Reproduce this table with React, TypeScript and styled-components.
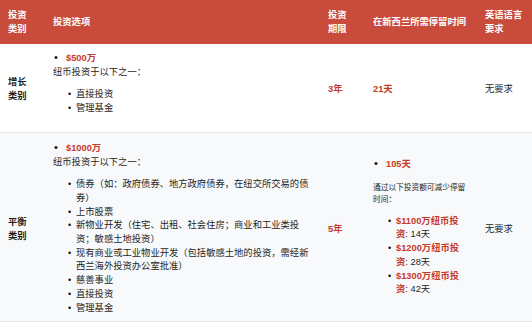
import * as React from 'react';
import styled, { createGlobalStyle } from 'styled-components';

const GlobalStyle = createGlobalStyle`
  body {
    margin: 0;
    background: #fff;
    font-family: "Liberation Sans", "Noto Sans CJK SC", sans-serif;
  }
`;

const COLS = '45px 275px 45px 112px 55px';

const Table = styled.div`
  width: 532px;
`;

const Row = styled.div<{ $bg?: string }>`
  display: grid;
  grid-template-columns: ${COLS};
  background: ${p => p.$bg || '#fff'};
  border-bottom: 1px solid #e6e9ec;
`;

const HeadRow = styled(Row)`
  height: 44px;
  background: #c84b3b;
  border-bottom: none;
`;

const HeadCell = styled.div`
  display: flex;
  align-items: center;
  padding: 0 8px;
  color: #fff;
  font-weight: bold;
  font-size: 9.3px;
  line-height: 14px;
`;

const Cell = styled.div<{ $pt?: number; $pb?: number }>`
  display: flex;
  flex-direction: column;
  justify-content: center;
  padding: ${p => p.$pt ?? 0}px 8px ${p => p.$pb ?? 0}px;
  font-size: 9.3px;
  line-height: 13.7px;
  color: #1e1e1e;
`;

const Label = styled.div`
  font-weight: bold;
`;

const Red = styled.span`
  color: #c53a2a;
  font-weight: bold;
`;

const Para = styled.p`
  margin: 0;
`;

const Note = styled.p`
  margin: 10px 0 9px;
  font-size: 7.7px;
  line-height: 12px;
`;

const List = styled.ul<{ $nested?: boolean }>`
  list-style: none;
  margin: ${p => (p.$nested ? '9px 0' : '0')};
  padding-left: ${p => (p.$nested ? 23 : 13)}px;
`;

const Item = styled.li<{ $nested?: boolean }>`
  &::before {
    content: '•';
    display: inline-block;
    width: ${p => (p.$nested ? 8 : 12)}px;
    margin-left: ${p => (p.$nested ? -8 : -12)}px;
    font-size: ${p => (p.$nested ? 9 : 11)}px;
    color: #111;
  }
`;

const growthFunds = ['直接投资', '管理基金'];

const balancedFunds = [
  '债券（如：政府债券、地方政府债券，在纽交所交易的债券）',
  '上市股票',
  '新物业开发（住宅、出租、社会住房；商业和工业类投资；敏感土地投资）',
  '现有商业或工业物业开发（包括敏感土地的投资，需经新西兰海外投资办公室批准）',
  '慈善事业',
  '直接投资',
  '管理基金',
];

const reductions = [
  { amount: '$1100万纽币投资', days: '14天' },
  { amount: '$1200万纽币投资', days: '28天' },
  { amount: '$1300万纽币投资', days: '42天' },
];

export default function App() {
  return (
    <>
      <GlobalStyle />
      <Table>
        <HeadRow>
          <HeadCell>投资<br />类别</HeadCell>
          <HeadCell>投资选项</HeadCell>
          <HeadCell>投资<br />期限</HeadCell>
          <HeadCell>在新西兰所需停留时间</HeadCell>
          <HeadCell>英语语言<br />要求</HeadCell>
        </HeadRow>

        <Row>
          <Cell $pt={4}><Label>增长<br />类别</Label></Cell>
          <Cell $pt={7} $pb={7}>
            <List>
              <Item><Red>$500万</Red></Item>
            </List>
            <Para>纽币投资于以下之一：</Para>
            <List $nested>
              {growthFunds.map(f => (
                <Item $nested key={f}>{f}</Item>
              ))}
            </List>
          </Cell>
          <Cell $pt={4}><Red>3年</Red></Cell>
          <Cell $pt={4}><Red>21天</Red></Cell>
          <Cell $pt={4}>无要求</Cell>
        </Row>

        <Row $bg="#f8f9fa">
          <Cell $pt={5}><Label>平衡<br />类别</Label></Cell>
          <Cell $pt={8} $pb={6}>
            <List>
              <Item><Red>$1000万</Red></Item>
            </List>
            <Para>纽币投资于以下之一：</Para>
            <List $nested style={{ marginBottom: 0 }}>
              {balancedFunds.map(f => (
                <Item $nested key={f}>{f}</Item>
              ))}
            </List>
          </Cell>
          <Cell $pt={5}><Red>5年</Red></Cell>
          <Cell>
            <List>
              <Item><Red>105天</Red></Item>
            </List>
            <Note>通过以下投资额可减少停留时间：</Note>
            <List $nested style={{ margin: 0 }}>
              {reductions.map(r => (
                <Item $nested key={r.amount}>
                  <Red>{r.amount}</Red>: {r.days}
                </Item>
              ))}
            </List>
          </Cell>
          <Cell $pt={5}>无要求</Cell>
        </Row>
      </Table>
    </>
  );
}
